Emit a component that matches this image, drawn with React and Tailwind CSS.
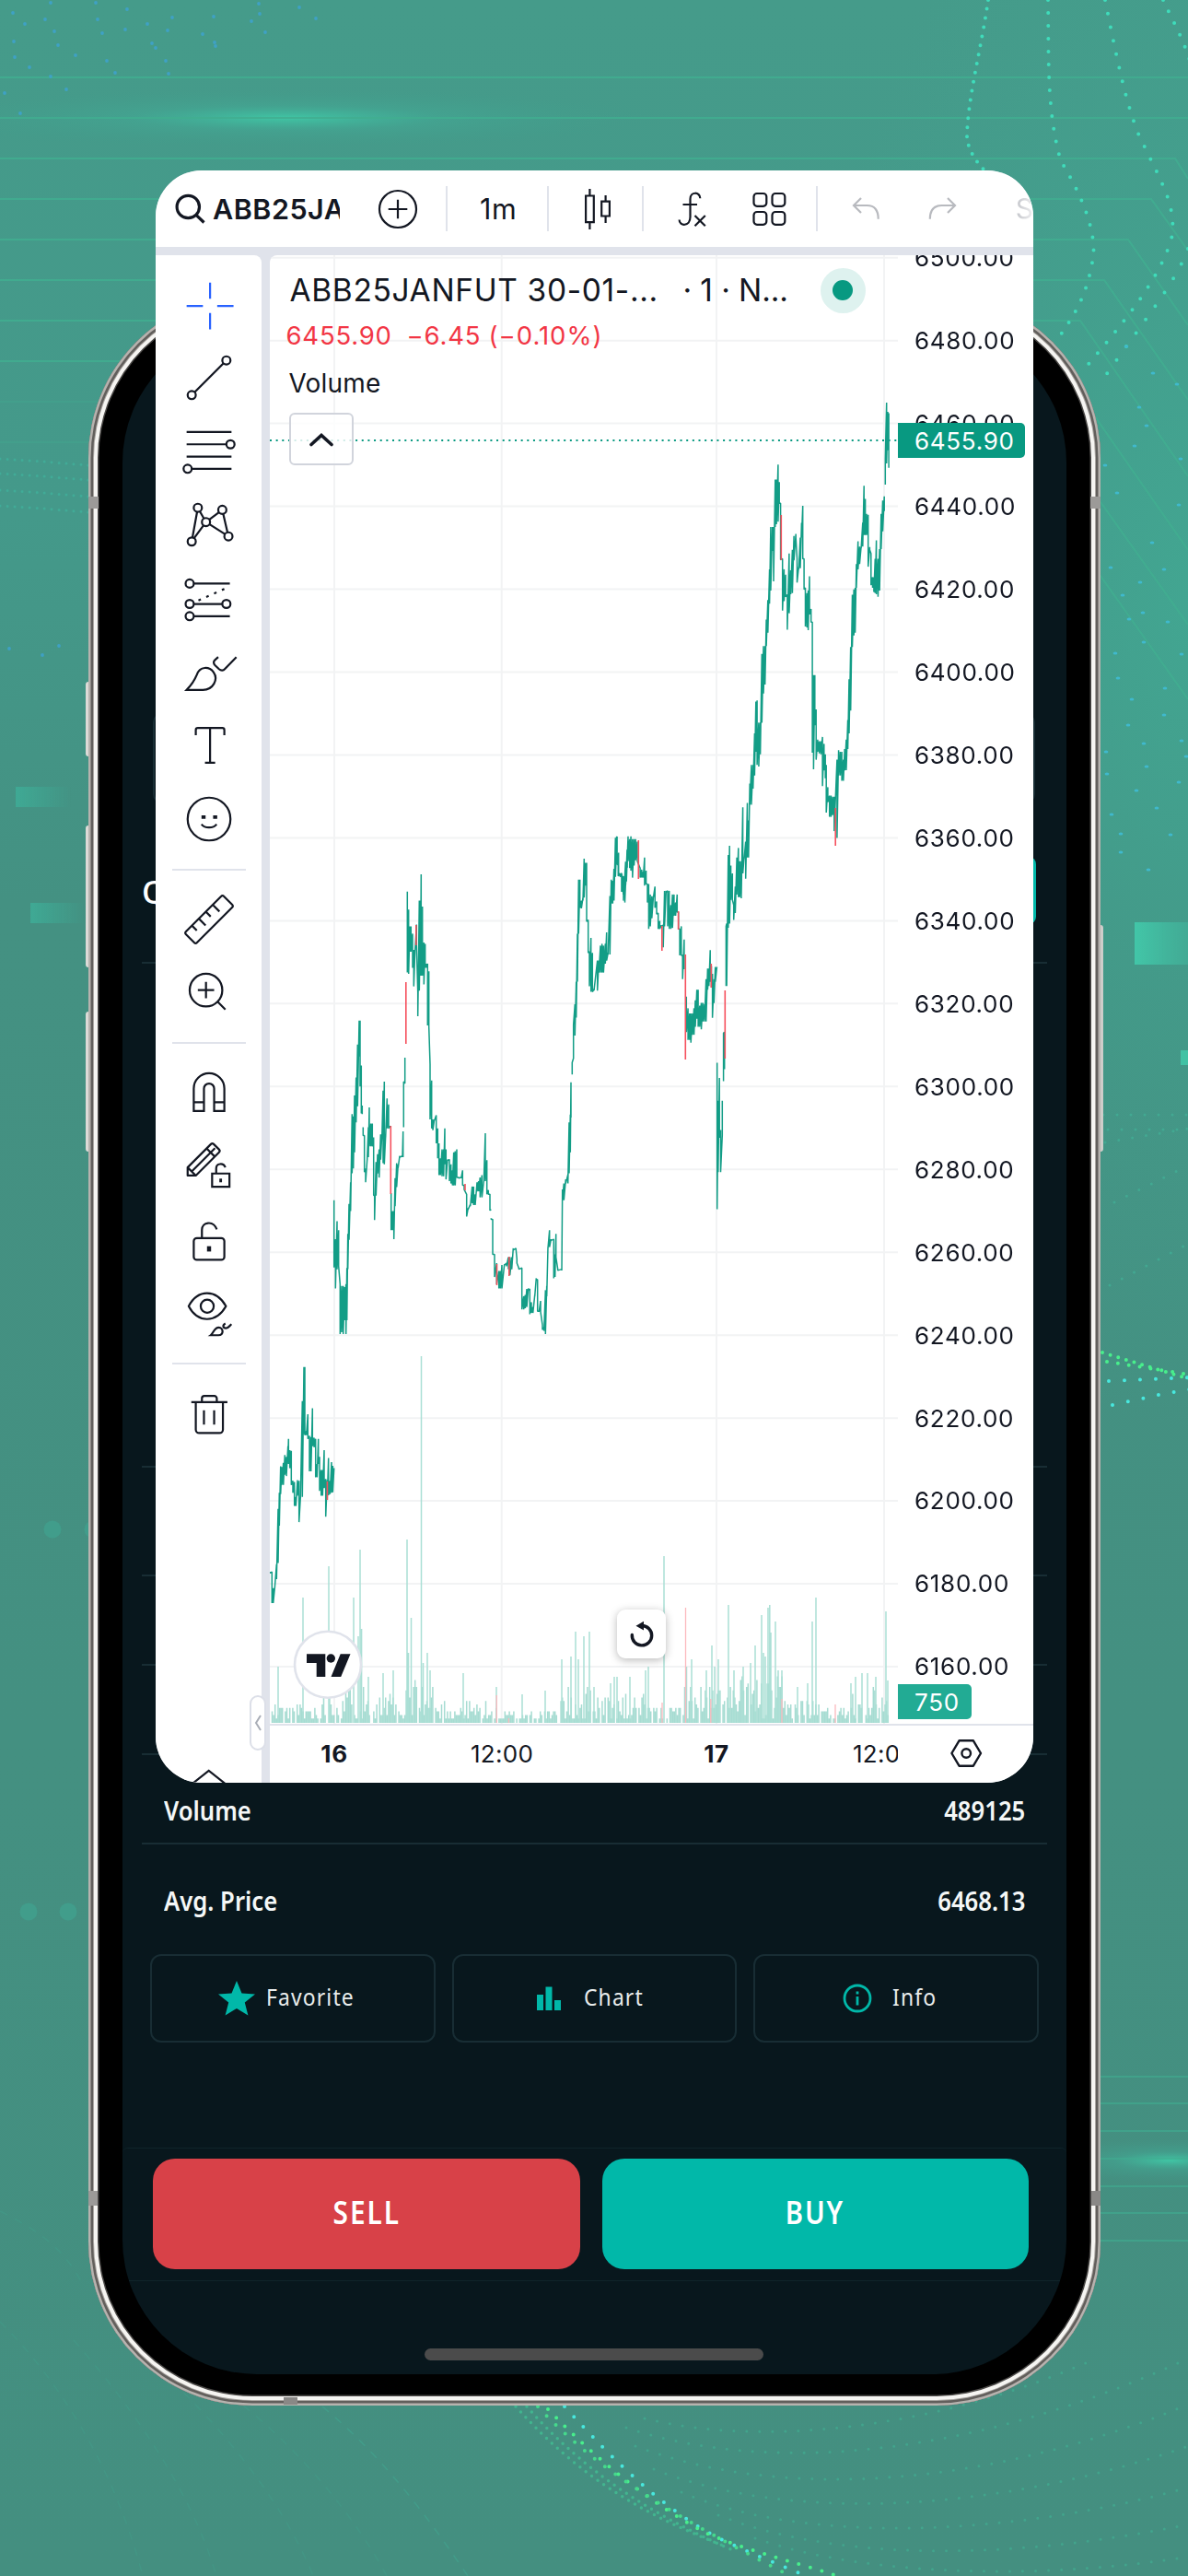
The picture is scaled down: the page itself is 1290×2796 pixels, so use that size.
import { Fragment } from 'react';

const PRICES = Array.from({ length: 18 }, (_, i) => (6500 - i * 20).toFixed(2));

// Each run holds bars as "x high low" in its own grid; `at` and `scale` place the grid on the chart.
const RUNS = [
  {
    at: [280, 880],
    scale: [1 / 3, 0.6505],
    bars: '40 1270 1272,46 1270 1322,50 1297 1322,55 1297 1298,61 1257 1282,66 1165 1255,70 1138 1193,74 1094 1140,78 1095 1125,83 1088 1125,88 1075 1108,93 1078 1110,98 1060 1080,100 1048 1090,104 1067 1097,109 1068 1125,114 1118 1138,119 1120 1160,124 1145 1160,129 1117 1143,134 1118 1187,139 1145 1147,145 985 1145,150 928 1040,153 928 1042,158 1035 1042,163 1007 1048,168 1043 1102,173 1045 1102,178 997 1060,183 1046 1062,188 1048 1112,193 1090 1112,197 1048 1090,201 1078 1135,206 1100 1143,211 1100 1143,216 1067 1130,221 1115 1178,226 1117 1150,230 1080 1142,235 1118 1140,240 1087 1138,244 1093 1137,248 1097 1098',
  },
  {
    at: [280, 880],
    scale: [1 / 3, 0.6505],
    bars: '248 650 762,253 715 797,258 685 765,263 700 760,268 790 873,273 793 870,278 793 873,283 795 850,287 790 873,290 763 850,293 706 765,297 656 716,302 620 668,307 506 605,311 510 597,315 475 570,320 445 520,325 390 493,330 350 410,333 350 460,337 425 505,340 492 506',
  },
  {
    at: [280, 880],
    scale: [1 / 3, 0.6505],
    bars: '343 528 542,347 542 603,351 597 620,356 582 583,360 528 578,363 495 560,368 522 560,373 522 560,377 545 642,380 642 683,385 586 642,390 573 605,395 565 612,400 540 582,404 540 548,408 467 588,412 452 590,416 543 545,421 480 530,426 490 530,431 526 528',
  },
  {
    at: [280, 880],
    scale: [1 / 3, 0.6505],
    bars: '434 638 700,439 668 700,443 668 715,447 613 660,452 588 628,457 590 596,462 576 578,471 576 578,473 535 578',
  },
  { at: [280, 880], scale: [1 / 3, 0.6505], bars: '475 528 452,479 455 412' },
  {
    at: [280, 880],
    scale: [1 / 3, 0.6505],
    bars: '487 135 270,491 165 272,495 193 235,499 193 235,504 205 262,508 232 293,512 232 233,517 190 225,521 303 343,526 150 300,530 150 275,532 106 275,536 160 275,541 220 290,545 222 262,549 255 262,553 255 358,557 268 360,561 423 515,566 450 530,570 515 533,575 515 517,581 508 555,586 530 580,590 555 608,595 580 608,600 565 610,605 565 610,609 530 590,613 565 615,618 582 583,624 582 618,629 590 622,634 600 625,638 570 625,643 568 625,648 565 612,654 612 613,662 612 613,667 600 625,672 625 632,680 640 677,685 663 665,692 657 660,698 627 655,703 627 658,708 640 658,714 620 635,719 618 635,724 612 645,730 608 645,736 618 620,741 538 618,746 583 640,751 633 640,756 640 667,758 665 667',
  },
  {
    at: [280, 880],
    scale: [1 / 3, 0.6505],
    bars: '760 680 682,765 682 740,771 740 778,778 755 790,785 768 797,790 768 797,795 758 797,803 757 758,810 755 760,816 745 765,821 745 775,827 745 765,832 730 733,841 730 732,844 748 755,850 763 765,860 763 832,866 810 832,871 808 830,876 798 828,881 797 800,886 798 840,891 820 838,896 828 838,902 808 810,907 780 783,911 782 835,916 835 836,921 818 836,927 858 866,932 862 868,937 800 873,941 793 810,945 728 730,950 700 728,955 715 717,964 715 780,968 740 778,971 706 745,977 765 767,990 765 767,992 632 650,997 622 650,1003 615 622,1010 607 622,1014 520 605,1018 507 570,1020 453 512',
  },
  {
    at: [280, 880],
    scale: [1 / 3, 0.6505],
    bars: '1024 440 420,1028 413 357,1033 323 375,1037 285 345,1041 205 285,1045 115 205,1049 115 162,1054 150 163,1059 145 150,1063 80 145,1067 87 125,1071 87 185,1076 182 237,1080 235 293,1085 212 302,1090 237 302,1095 298 300,1106 250 300,1111 250 270,1116 225 270,1121 222 270,1126 225 270,1132 222 255,1136 203 250,1141 237 240,1147 142 240,1151 115 155,1156 117 155,1160 97 150,1165 45 110,1170 43 90,1175 70 108,1180 105 110,1186 107 135,1191 115 150,1198 85 125,1203 65 95',
  },
  {
    at: [600, 440],
    scale: [0.3444, 0.574],
    bars: '202 815 865,207 870 890,212 885 887,218 885 920,223 890 925,228 890 940,233 865 900,238 815 862,243 820 875,247 815 880,252 820 893,257 820 870,262 820 860,267 825 862,276 875 893,281 878 893,286 882 893,290 855 908,295 880 905,299 905 940,303 905 990,308 925 985,313 928 970,318 928 930,323 910 950,328 938 962,333 960 990,338 975 990,343 983 985,349 983 1025,353 918 985,358 918 920,363 918 985,368 918 990,373 945 990,378 925 988,383 925 965,388 940 965,393 925 958,397 958 990,401 990 1040,406 985 1040,410 1040 1085,415 1010 1066',
  },
  {
    at: [600, 440],
    scale: [0.3444, 0.574],
    bars: '422 1118 1185,427 1140 1200,432 1150 1200,436 1150 1205,441 1150 1190,446 1140 1190,450 1125 1175,455 1105 1160,459 1105 1175,464 1135 1175,469 1130 1180,474 1130 1165,479 1132 1165,484 1085 1165,489 1065 1105,493 1065 1098,497 1030 1090,501 1060 1100,504 1075 1158,509 1085 1130,513 1062 1090,518 1062 1064',
  },
  {
    at: [600, 440],
    scale: [0.3444, 0.574],
    bars: '519 1243 1520,522 1315 1450,526 1272 1385,530 1370 1450,535 1380 1315',
  },
  { at: [600, 440], scale: [0.3444, 0.574], bars: '539 1278 1187,542 1185 1255' },
  {
    at: [600, 440],
    scale: [0.3444, 0.574],
    bars: '547 1098 985,549 980 1098,554 850 988,558 833 980,562 870 935,567 885 935,571 945 973,576 910 960,581 855 925,586 837 930,590 862 930,595 862 932,600 760 885,604 855 858,609 825 895,614 752 855,618 785 855,622 715 755,627 680 755,632 680 725,637 620 700,641 560 655,645 558 680,650 600 683,655 600 660,660 470 600,665 455 545,670 455 528,674 405 455,679 368 430,684 310 375,688 230 350,693 230 275,697 230 333,702 140 230,706 140 225,711 112 220,715 145 185,719 185 292,725 290 388,730 310 370,735 320 362,740 358 424,746 280 393,751 312 357,756 273 355,761 247 293,767 243 250,771 290 335,776 305 310,781 250 308,785 222 250,789 190 290,793 290 348,797 345 418,802 355 420,806 350 425,810 323 395,815 385 410,819 410 657,823 510 688,827 510 605,831 575 670,836 632 655,841 635 658,846 635 660,851 627 720,856 640 690,860 660 705,863 680 770,868 722 750,873 738 778,878 738 778,883 740 775,888 740 805,897 670 818,902 652 700,907 655 700,912 655 710,917 670 710,921 650 690,926 632 690,931 595 650,935 518 620,940 457 577,945 358 457,950 348 435,954 345 430,958 300 345,963 257 310,968 267 300,973 267 270,978 222 267,982 152 245,986 177 245,990 205 245,995 207 305,1000 268 273,1004 280 340,1009 325 345,1013 325 353,1017 290 355,1021 255 357,1026 290 362,1031 272 350,1036 205 272,1041 180 238,1046 172 200',
  },
  { at: [600, 440], scale: [0.3444, 0.574], bars: '1049 150 100,1053 -5 110,1057 12 85,1060 15 118' },
];

const toPath = ({ at, scale, bars }) =>
  bars
    .split(',')
    .map((bar, i) => {
      const [x, a, b] = bar.split(' ').map(Number);
      const px = (at[0] + x * scale[0]).toFixed(1);
      const y1 = (at[1] + a * scale[1]).toFixed(1);
      const y2 = (at[1] + b * scale[1]).toFixed(1);
      return `${i ? 'L' : 'M'}${px} ${y1}V${y2}`;
    })
    .join('');

const RED_BARS = [
  [440.8, 1066, 1133],
  [451.8, 1004, 1026],
  [355.4, 1608, 1628],
  [424.3, 1222, 1296],
  [505, 1285, 1292],
  [539.5, 1372, 1395],
  [552.8, 1364, 1385],
  [693.3, 912, 954],
  [718.8, 1005, 1032],
  [736.6, 989, 1009],
  [744.3, 1036, 1150],
  [772.3, 1046, 1072],
  [787.3, 1075, 1149],
  [848.3, 559, 608],
  [907.2, 877, 918],
];

const SPIKES = [
  [302, 61], [329, 136], [357, 170], [384, 136], [391, 188], [392.6, 102], [389, 94], [400, 50], [416, 54], [427, 57],
  [442, 199], [443.5, 76], [446.5, 114], [457.5, 398], [459.5, 65], [464, 76], [467, 57], [503, 54], [539, 39], [567, 31],
  [592, 35], [610, 69], [620, 72], [625, 99], [628, 69], [634, 94], [640, 99], [645, 39], [663, 43], [667, 50], [670, 50],
  [684, 50], [701, 57], [704, 61], [721, 181], [745.5, 61], [751, 69], [767, 57], [773, 84], [776, 61], [780, 69], [791, 128],
  [797, 57], [807, 61], [815, 65], [820, 84], [827, 117], [829, 76], [831, 72], [834, 125], [835.8, 128], [837, 98],
  [842, 110], [845, 57], [849, 57], [866, 39], [877, 43], [882, 110], [886, 136], [924, 43], [929, 50], [936, 54], [942, 54],
  [951, 50], [962, 121], [964, 46],
];

const VOLUME_LEVELS = [
  [350, 22], [400, 42], [430, 30], [440, 12], [470, 46], [528, 26], [608, 14], [650, 40], [700, 30], [738, 18],
  [800, 42], [850, 50], [890, 28], [916, 18], [970, 40],
];

function volumePath() {
  let seed = 11;
  let d = '';
  for (let x = 295.5; x < 965; x += 1.6) {
    seed = (seed * 1103515245 + 12345) % 2147483648;
    const r = seed / 2147483648;
    const level = VOLUME_LEVELS.find(([end]) => x < end)[1];
    const steps = Math.round((Math.pow(r, 1.3) * level) / 3.8);
    if (steps) d += `M${x.toFixed(1)} 1870v-${(steps * 3.8 + 1).toFixed(1)}`;
  }
  return d;
}

function PriceChart() {
  return (
    <svg className="block h-full w-full" viewBox="293 277 682 1594" fill="none">
      <g stroke="#f2f3f4" strokeWidth="2">
        {PRICES.map((price, i) => (
          <path key={price} d={`M293 ${279.7 + i * 89.96}H975`} />
        ))}
        <path d="M363 277V1871M544.7 277V1871M778 277V1871M960 277V1871" />
      </g>
      <path d={volumePath()} stroke="#a6dcd2" strokeWidth="1.5" />
      <path d={SPIKES.map(([x, h]) => `M${x} 1870v-${h}`).join('')} stroke="#aadfd5" strokeWidth="1.5" />
      <path
        d="M744.5 1870v-125M719 1870v-22M771.8 1870v-26M849 1870v-26M907 1870v-20M539.3 1870v-30M552.4 1870v-5"
        stroke="#fbb9be"
        strokeWidth="1.3"
      />
      <path d="M293 478H975" stroke="#089981" strokeWidth="2" strokeDasharray="2 4.65" />
      {RUNS.map((run) => (
        <path key={run.bars.slice(0, 16)} d={toPath(run)} stroke="#129d86" strokeWidth="1.5" strokeLinejoin="bevel" />
      ))}
      <path d={RED_BARS.map(([x, a, b]) => `M${x} ${a}V${b}`).join('')} stroke="#f5505d" strokeWidth="1.6" />
      <circle cx="356" cy="1806.7" r="36" fill="#fff" stroke="#e0e3eb" strokeWidth="2.6" />
      <path d="M333 1795.3h20.3v24.7h-9.6v-15H333zM369.7 1795.3h10.8l-10.3 24.7h-10.7z" fill="#131722" />
      <circle cx="359.3" cy="1800" r="4.7" fill="#131722" />
    </svg>
  );
}

const dot = (cx, cy, r = 2) => <circle cx={cx} cy={cy} r={r} fill="#fff" />;

const TOOL_GROUPS = [
  [
    <path key="cross" stroke="#2962ff" d="M3 14.5h8M18 14.5h8M14.5 3v8M14.5 18v8" />,
    <g key="trend">
      <path d="M7 21L21 7" />
      {dot(5.5, 22.5)}
      {dot(22.5, 5.5)}
    </g>,
    <g key="fib">
      <path d="M3 4.5h22M3 10.5h19.5M3 16.5h22M5.5 22.5H25" />
      {dot(24.5, 10.5)}
      {dot(3.5, 22.5)}
    </g>,
    <g key="pattern">
      <path d="M8.5 5.5L5.5 22M5.5 22L12.5 12.5M8.5 5.5L12.5 12.5M12.5 12.5L20.5 6.5M12.5 12.5L23.5 19.5M20.5 6.5L23.5 19.5" />
      {dot(8.5, 5.5)}
      {dot(20.5, 6.5)}
      {dot(12.5, 12.5)}
      {dot(5.5, 22)}
      {dot(23.5, 19.5)}
    </g>,
    <g key="forecast">
      <path d="M6.5 6.5H24.2M6.5 16.5h14M6.5 22.5H24.2" />
      <path d="M8.8 14.8L24 8" strokeDasharray="1.3 2.9" />
      {dot(4.5, 6.5)}
      {dot(4.5, 16.5)}
      {dot(22.5, 16.5)}
      {dot(4.5, 22.5)}
    </g>,
    <path
      key="brush"
      d="M3 22.5C5 20.5 6.9 17.8 8 15.1C9.500 10.7 14.1 11 16.2 13.8C18.7 17.3 16 22.5 11 22.5ZM18.5 6.4L17 7.7C16 8.6 16.1 9.6 17 10.5L18.9 12.3C19.9 13.2 21 13.1 21.8 12.2L27.4 6.4"
    />,
    <path key="text" d="M7.5 9V6.5a1 1 0 0 1 1-1h12a1 1 0 0 1 1 1V9M14.5 5.5v17M12 22.5h5" />,
    <g key="smile">
      <circle cx="14" cy="14" r="10.5" />
      <path d="M10.3 13h2M16 13h2" strokeWidth="1.7" />
      <path d="M10.3 16.5c1.6 2.2 5.800 2.2 7.4 0" />
    </g>,
  ],
  [
    <path
      key="ruler"
      strokeLinejoin="round"
      d="M2.6 20L20 2.6a.8.8 0 0 1 1.2 0L25.4 6.8a.8.8 0 0 1 0 1.2L8 25.4a.8.8 0 0 1-1.2 0L2.6 21.2a.8.8 0 0 1 0-1.2ZM5.6 17l2.4 2.4M9 13.6l3.3 3.3M12.4 10.2l2.4 2.4M15.8 6.8l3.3 3.3"
    />,
    <g key="zoom">
      <circle cx="12.5" cy="12.5" r="8" />
      <path d="M8.5 12.5h8M12.5 8.5v8M18.2 18.2l3.8 3.8" />
    </g>,
  ],
  [
    <path key="magnet" d="M6.5 23v-11a7.5 7.5 0 0 1 15 0v11h-5v-11a2.5 2.5 0 0 0-5 0v11ZM6.5 18.7h5M16.5 18.7h5" />,
    <g key="pencil">
      <path
        strokeLinejoin="round"
        d="M3.5 18.5v-4L14.9 3.1a1 1 0 0 1 1.4 0l2.6 2.6a1 1 0 0 1 0 1.4L7.5 18.5ZM3.5 14.5l4 4M5.5 16.5L16.9 5.1M12.8 5.2l4 4"
      />
      <path d="M15.5 17.5h8.5v6.5h-8.500ZM17.5 17.5v-2.5c0-2.5 3.5-3 4.5-.5" />
      <path d="M19.7 20v1.8" strokeWidth="1.3" />
    </g>,
    <g key="lock">
      <rect x="6.5" y="13" width="15" height="10.7" rx="1.5" />
      <path d="M10.5 13V9c0-3.800 5.500-5 7.300-.2" />
      <path d="M14 17v2.6" strokeWidth="2" />
    </g>,
    <g key="eye">
      <path d="M4 10.3C8.500 1.8 17.5 1.8 22.3 10.3C17.5 18.7 8.500 18.7 4 10.3Z" strokeLinejoin="round" />
      <circle cx="13.1" cy="10.3" r="3.2" />
      <path d="M14.8 24.5c1.5-1.2 1.7-3.800 4-3.800c2.2 0 2.7 3.800-.2 3.800ZM22 18.7c-1.5.8-1.3 2.3.3 2.4c1 0 1.5-.9 2.7-2" />
    </g>,
  ],
  [
    <path
      key="trash"
      d="M5.3 8.5H23M10.5 8.5V6.7a1.2 1.2 0 0 1 1.2-1.2h4.9a1.2 1.2 0 0 1 1.2 1.2v1.8M7.5 8.5v13.5a1.7 1.7 0 0 0 1.7 1.7h9.9a1.7 1.7 0 0 0 1.7-1.7V8.500M11.5 12.5v7M16.5 12.5v7"
    />,
  ],
];

function Toolbar() {
  return (
    <div className="relative w-[115px] shrink-0 overflow-hidden rounded-tr-lg bg-white pt-[22.5px]">
      {TOOL_GROUPS.map((group, i) => (
        <Fragment key={i}>
          {i > 0 && <div className="mt-[4.7px] mb-[22px] ml-[18px] h-[2px] w-[80px] bg-[#e0e3eb]" />}
          {group.map((icon) => (
            <div key={icon.key} className="h-[79.83px] pl-[27px]">
              <svg className="size-[62px]" viewBox="0 0 28 28" fill="none" stroke="#131722">
                {icon}
              </svg>
            </div>
          ))}
        </Fragment>
      ))}
      <svg className="mt-[336.5px] ml-[38px] block h-[20px] w-[40px]" viewBox="0 0 40 20" fill="none" stroke="#131722" strokeWidth="2.2">
        <path d="M0 18.5L19.7 3L39.4 18.5" />
      </svg>
    </div>
  );
}

const Divider = () => <div className="h-[49px] w-[2px] shrink-0 bg-[#e0e3eb]" />;

function TopBar() {
  return (
    <div className="flex h-[83px] shrink-0 items-center overflow-hidden bg-white pl-[21px] text-[#131722]">
      <svg className="size-[36px] shrink-0" viewBox="0 0 36 36" fill="none" stroke="currentColor" strokeWidth="3.2">
        <circle cx="14.3" cy="15.5" r="12.2" />
        <path d="M23 24.3l8.5 8.2" />
      </svg>
      <div className="ml-[5px] w-[138px] overflow-hidden text-[30.5px] font-semibold tracking-[0.5px] whitespace-nowrap">ABB25JA</div>
      <svg className="ml-[41px] size-[44px] shrink-0" viewBox="0 0 44 44" fill="none" stroke="currentColor" strokeWidth="2.2">
        <circle cx="22" cy="22" r="20" />
        <path d="M11.7 22h20.6M22 11.7v20.6" />
      </svg>
      <div className="ml-[30px]">
        <Divider />
      </div>
      <div className="w-[108px] shrink-0 pl-[3px] text-center text-[30.5px] tracking-[0.8px]">1m</div>
      <Divider />
      <svg className="ml-[36px] h-[46px] w-[34px] shrink-0" viewBox="0 0 34 46" fill="none" stroke="currentColor" strokeWidth="2.2">
        <path d="M4.1 8.500h8.700v28.700H4.100ZM8.400 1v7.500M8.400 37.200V45M21.2 14.7h8.700v15.8h-8.700ZM25.6 8v6.7M25.6 30.5V38" />
      </svg>
      <div className="ml-[31px]">
        <Divider />
      </div>
      <svg className="ml-[37px] h-[40px] w-[34px] shrink-0" viewBox="0 0 34 40" fill="none" stroke="currentColor" strokeWidth="2.2">
        <path d="M24.3 8.3C24.3 1 13.5 .5 13.5 9V28.5C13.5 39 1.6 39 1.6 31.5M5.5 15h15.500M18.5 27l11.300 11.300M29.8 27L18.5 38.3" />
      </svg>
      <svg className="ml-[47.5px] size-[38px] shrink-0" viewBox="0 0 38 38" fill="none" stroke="currentColor" strokeWidth="2.2">
        <rect x="1.5" y="2" width="13.8" height="13.8" rx="3.5" />
        <rect x="21.5" y="2" width="13.8" height="13.8" rx="3.5" />
        <rect x="1.5" y="22" width="13.8" height="13.8" rx="3.5" />
        <rect x="21.5" y="22" width="13.8" height="13.8" rx="3.5" />
      </svg>
      <div className="ml-[30.5px]">
        <Divider />
      </div>
      <svg className="ml-[37px] h-[28px] w-[32px] shrink-0 text-[#b8babf]" viewBox="0 0 32 28" fill="none" stroke="currentColor" strokeWidth="2.2">
        <path d="M10 2L2 10l8 8M2 10h14.5c8 0 12.2 5 12.2 14.7" />
      </svg>
      <svg className="ml-[50px] h-[28px] w-[32px] shrink-0 text-[#b8babf]" viewBox="0 0 32 28" fill="none" stroke="currentColor" strokeWidth="2.2">
        <path d="M22 2l8 8l-8 8M30 10H15.5C7 10 2.8 15 2.8 24.7" />
      </svg>
      <div className="ml-[64px] bg-gradient-to-r from-[#c3c5ca] to-[#efeff1] bg-clip-text text-[30px] text-transparent">S</div>
    </div>
  );
}

function Legend() {
  return (
    <div className="absolute inset-x-0 top-0 pl-[20.5px] text-[#131722]">
      <div className="flex h-[76px] items-center text-[33.5px] whitespace-nowrap">
        <span className="w-[428px] pl-px tracking-[0.65px]">ABB25JANFUT 30-01-...</span>
        <span className="w-[140px] tracking-[-0.1px]">· 1 · N...</span>
        <span className="ml-[9px] flex size-[49px] items-center justify-center rounded-full bg-[#def2ef]">
          <span className="size-[22px] rounded-full bg-[#089981]" />
        </span>
      </div>
      <div className="-ml-[3px] flex h-[24px] items-center text-[27.5px] whitespace-nowrap text-[#f23645]">
        <span className="w-[131px] tracking-[0.8px]">6455.90</span>
        <span className="w-[89px] tracking-[0.8px]">−6.45</span>
        <span className="tracking-[1px]">(−0.10%)</span>
      </div>
      <div className="mt-[22px] text-[28px] leading-[34px] tracking-[0.2px]">Volume</div>
      <div className="mt-[15px] flex h-[57px] w-[70px] items-center justify-center rounded-md border-2 border-[#d1d4dc] bg-white/80">
        <svg className="h-[16px] w-[28px]" viewBox="0 0 28 16" fill="none" stroke="#131722" strokeWidth="3.6" strokeLinecap="round">
          <path d="M3 13.5L14 3.5l11 10" />
        </svg>
      </div>
    </div>
  );
}

function ChartCard() {
  return (
    <div className="absolute top-[185px] left-[169px] flex h-[1750px] w-[953px] flex-col overflow-hidden rounded-[50px] bg-[#e0e3eb]">
      <TopBar />
      <div className="flex min-h-0 flex-1 gap-[9px] pt-[9px]">
        <Toolbar />
        <div className="flex w-[829px] flex-col overflow-hidden rounded-tl-lg bg-white">
          <div className="flex h-[1594px] shrink-0">
            <div className="relative w-[682px] shrink-0">
              <PriceChart />
              <Legend />
              <div className="absolute top-[1470px] left-[377px] flex size-[53px] items-center justify-center rounded-[9px] bg-white shadow-[0_2px_10px_rgba(0,0,0,0.28)]">
                <svg className="size-[30px]" viewBox="0 0 30 30" fill="none" stroke="#131722" strokeWidth="3.4">
                  <path d="M4.3 15.500A10.700 10.700 0 1 0 15 5.500h-1" strokeLinecap="round" />
                  <path d="M8.500 5.800L17 .8V10.500Z" fill="#131722" stroke="none" />
                </svg>
              </div>
            </div>
            <div className="relative flex-1 overflow-hidden text-[26px] tracking-[0.7px] text-[#131722]">
              <div className="-mt-[42.3px]">
                {PRICES.map((price) => (
                  <div key={price} className="flex h-[89.96px] items-center pl-[18px]">
                    {price}
                  </div>
                ))}
              </div>
              <div className="absolute top-[182px] left-0 flex h-[38px] w-[138px] items-center rounded-r-[5px] bg-[#089981] pl-[18px] text-white">
                6455.90
              </div>
              <div className="absolute top-[1551px] left-0 flex h-[38px] w-[80px] items-center rounded-r-[5px] bg-[#22ab94] pl-[18px] text-white">
                750
              </div>
            </div>
          </div>
          <div className="flex flex-1 border-t-2 border-[#e0e3eb] text-[26px] text-[#131722]">
            <div className="flex h-[60px] w-[682px] shrink-0 items-center overflow-hidden">
              <div className="ml-[20px] w-[100px] shrink-0 text-center font-bold tracking-[0.7px]">16</div>
              <div className="ml-[82px] w-[100px] shrink-0 text-center tracking-[0.3px]">12:00</div>
              <div className="ml-[133px] w-[100px] shrink-0 text-center font-bold tracking-[0.7px]">17</div>
              <div className="ml-[82px] w-[100px] shrink-0 text-center tracking-[0.3px]">12:00</div>
            </div>
            <svg className="mt-[12px] ml-[56px] size-[36px]" viewBox="0 0 36 36" fill="none" stroke="#131722" strokeWidth="2.4">
              <path d="M10.5 4.3h15.4L34 18l-8.100 13.700H10.5L2.4 18Z" strokeLinejoin="round" />
              <circle cx="18.2" cy="18" r="4.8" />
            </svg>
          </div>
        </div>
      </div>
      <div className="absolute top-[1655px] left-[102px] flex h-[60px] w-[18px] items-center justify-center rounded-[9px] border-2 border-[#dcdfe8] bg-white">
        <svg className="h-[18px] w-[10px] shrink-0" viewBox="0 0 10 18" fill="none" stroke="#a9adb6" strokeWidth="2">
          <path d="M8 1L3 9l5 8" />
        </svg>
      </div>
    </div>
  );
}

function Action({ icon, label, textClass }) {
  return (
    <div className="flex h-[96px] items-center justify-center rounded-[12px] border-2 border-[#182d34] text-[26px] text-[#e8ecec]">
      {icon}
      <span className={`${textClass} -mt-[3px] origin-left scale-x-[0.88] tracking-[1.3px] whitespace-nowrap`}>{label}</span>
    </div>
  );
}

function StatRow({ label, value }) {
  return (
    <div className="mx-[21px] flex h-[97px] shrink-0 items-center justify-between border-b-2 border-[#182d34] px-[24px] pt-[25px] text-[29.5px] font-semibold text-[#f4f7f7] last-of-type:border-0">
      <span className="origin-left scale-x-[0.87]">{label}</span>
      <span className="origin-right scale-x-[0.87]">{value}</span>
    </div>
  );
}

function Phone() {
  return (
    <div className="relative h-[2292px] w-[1099px] rounded-[178px] bg-black px-[37px] pt-[37px] pb-[34px] shadow-[inset_0_0_0_2.5px_#b7b3af,inset_0_0_0_5px_#625f5c,inset_0_0_0_6px_#aaa6a2,inset_0_0_0_10px_#f6f5f2,inset_0_0_0_11.5px_#4b4947]">
      <div className="absolute top-[421px] -left-[3px] h-[81px] w-[3px] rounded-l bg-[#dcdad7]" />
      <div className="absolute top-[577px] -left-[3px] h-[154px] w-[3px] rounded-l bg-[#dcdad7]" />
      <div className="absolute top-[779px] -left-[3px] h-[152px] w-[3px] rounded-l bg-[#dcdad7]" />
      <div className="absolute top-[685px] -right-[3px] h-[246px] w-[3px] rounded-r bg-[#cfcdca]" />
      <div className="absolute top-[220px] left-0 h-[13px] w-[11px] bg-[#9c9a98]" />
      <div className="absolute top-[220px] right-0 h-[13px] w-[11px] bg-[#9c9a98]" />
      <div className="absolute top-[2059px] left-0 h-[16px] w-[10px] bg-[#9c9a98]" />
      <div className="absolute top-[2059px] right-0 h-[16px] w-[10px] bg-[#8a8886]" />
      <div className="absolute bottom-[1px] left-[212px] h-[8px] w-[15px] bg-[#8a8886]" />
      <div className="flex h-full flex-col overflow-hidden rounded-[146px] bg-[#08171d] font-['Noto_Sans',sans-serif]">
        <div className="mt-[418px] mr-[34px] ml-[33px] h-[98px] shrink-0 rounded-[10px] border-2 border-[#182d34]" />
        <div className="mx-[21px] flex h-[174px] shrink-0 items-start justify-between border-b-2 border-[#182d34] pt-[58px] pr-[12px]">
          <span className="text-[35px] leading-[75px] font-medium text-white">Q</span>
          <span className="h-[73px] w-[140px] rounded-lg bg-[#01b8a9]" />
        </div>
        <div className="mx-[21px] h-[547px] shrink-0 border-b-2 border-[#182d34]" />
        <div className="mx-[21px] h-[118px] shrink-0 border-b-2 border-[#182d34]" />
        <div className="mx-[21px] h-[97px] shrink-0 border-b-2 border-[#182d34]" />
        <div className="mx-[21px] h-[97px] shrink-0 border-b-2 border-[#182d34]" />
        <StatRow label="Volume" value="489125" />
        <div className="mx-[21px] flex h-[97px] shrink-0 items-center justify-between px-[24px] pt-[25px] text-[29.5px] font-semibold text-[#f4f7f7]">
          <span className="origin-left scale-x-[0.87]">Avg. Price</span>
          <span className="origin-right scale-x-[0.87]">6468.13</span>
        </div>
        <div className="mx-[30px] mt-[22px] grid grid-cols-3 gap-[18px]">
          <Action
            label="Favorite"
            textClass="ml-[12px] w-[110px]"
            icon={
              <svg className="size-[40px]" viewBox="0 0 40 38" fill="#01b8a9">
                <path d="M20 0l5.500 13.400L40 14.5L28.8 23.6L32.4 37.5L20 30L7.6 37.5L11.2 23.6L0 14.5L14.5 13.4Z" />
              </svg>
            }
          />
          <Action
            label="Chart"
            textClass="ml-[25px] w-[74px]"
            icon={
              <svg className="size-[26px]" viewBox="0 0 26 26" fill="#01b8a9">
                <path d="M0 9h7v17H0ZM9.500 0.500h7V26h-7ZM19 15h7v11h-7Z" />
              </svg>
            }
          />
          <Action
            label="Info"
            textClass="ml-[22px] w-[62px]"
            icon={
              <svg className="size-[32px]" viewBox="0 0 32 32" fill="none" stroke="#01b8a9" strokeWidth="2.8">
                <circle cx="16" cy="16" r="14" />
                <path d="M16 14v9.500M16 8.500v3" />
              </svg>
            }
          />
        </div>
        <div className="mt-[114px] flex h-[145px] shrink-0 gap-[24px] rounded-t-[6px] border-y border-[#10242a] pt-[11px] pr-[41px] pl-[33px] text-[33.5px] font-semibold tracking-[2.2px] text-white">
          <div className="flex h-[120px] flex-1 items-center justify-center rounded-[24px] bg-[#d84148]">
            <span className="-mt-[3px] scale-x-[0.89]">SELL</span>
          </div>
          <div className="flex h-[120px] flex-1 items-center justify-center rounded-[24px] bg-[#01b8a9]">
            <span className="-mt-[3px] scale-x-[0.87]">BUY</span>
          </div>
        </div>
        <div className="mt-[73px] ml-[328px] h-[13px] w-[368px] shrink-0 rounded-full bg-[#4b4b4b]" />
      </div>
    </div>
  );
}

const BLUE_DOTS = [
  [14, 14], [27, 26], [55, 3], [49, 21], [59, 34], [104, 3], [106, 21], [111, 36], [138, 10], [136, 32], [160, 26], [165, 47], [182, 33],
  [187, 19], [220, 37], [233, 46], [232, 18], [281, 4], [282, 15], [325, 8], [343, 20], [273, 23], [288, 35], [234, 50], [169, 52],
  [180, 66], [125, 79], [183, 80], [32, 73], [15, 45], [16, 62], [55, 83], [72, 97], [5, 101], [22, 123], [63, 49], [82, 60], [116, 66],
  [10, 704], [46, 711], [64, 701],
];

const RIGHT_DOTS = [
  [1237, 442], [1245, 462], [1232, 484], [1206, 616], [1219, 646], [1226, 672], [1211, 709], [1214, 736], [1229, 759], [1225, 787],
  [1201, 816], [1202, 840], [1207, 884], [1217, 905], [1217, 925], [1245, 832], [1234, 858], [1242, 807], [1247, 944], [1256, 877],
  [1271, 906], [1264, 776], [1265, 747], [1268, 675], [1242, 697], [1264, 618], [1251, 589], [1282, 498], [1252, 405], [1223, 376],
  [1278, 417], [1283, 710], [1283, 804], [1280, 849], [1288, 821], [1280, 548], [1238, 632], [1241, 665], [1213, 535], [1200, 505],
];

function Backdrop() {
  return (
    <svg className="absolute inset-0 h-full w-full" viewBox="0 0 1290 2796" fill="none">
      <defs>
        <linearGradient id="page" x1="0" y1="0" x2="0" y2="1">
          <stop offset="0" stopColor="#459b8a" />
          <stop offset=".2" stopColor="#44998a" />
          <stop offset=".35" stopColor="#449182" />
          <stop offset="1" stopColor="#448f80" />
        </linearGradient>
        <radialGradient id="glow">
          <stop offset="0" stopColor="#40c5a4" />
          <stop offset=".4" stopColor="#42a995" stopOpacity=".5" />
          <stop offset="1" stopColor="#429a89" stopOpacity="0" />
        </radialGradient>
        <radialGradient id="haze">
          <stop offset="0" stopColor="#42a792" stopOpacity=".9" />
          <stop offset="1" stopColor="#43a08f" stopOpacity="0" />
        </radialGradient>
        <linearGradient id="fade">
          <stop offset="0" stopColor="#3fa994" />
          <stop offset="1" stopColor="#3fa994" stopOpacity="0" />
        </linearGradient>
        <linearGradient id="fadeBright">
          <stop offset="0" stopColor="#42c6a8" />
          <stop offset="1" stopColor="#42b099" stopOpacity=".3" />
        </linearGradient>
      </defs>
      <path d="M0 0h1290v2796H0Z" fill="url(#page)" />
      <ellipse cx="1290" cy="650" rx="420" ry="900" fill="url(#haze)" />
      <ellipse cx="310" cy="128" rx="420" ry="34" fill="url(#glow)" />
      <ellipse cx="1270" cy="2345" rx="150" ry="24" fill="url(#glow)" />
      <g stroke="#42ae91" strokeWidth="2" opacity=".85">
        <path d="M0 84H1290M0 128H1290M0 172H1276L1290 194M0 216H1250L1290 272M0 260H1225L1290 353M0 304H1199L1290 434M0 348H1173L1290 517M0 392H1147L1290 597M1190 538L1290 678M1190 618L1290 759" />
        <path d="M0 436H169M0 480H169" opacity=".35" />
        <path d="M1195 2254h95M1195 2283h95M1195 2313h95M1195 2343h95M1195 2373h95M1195 2402h95M1195 2432h95" opacity=".7" />
      </g>
      <g stroke="#3fdcbb" strokeWidth="4" strokeLinecap="round" strokeDasharray="0 10">
        <path d="M1073 0C1066 50 1050 110 1050 150C1052 165 1062 180 1080 195" />
        <path d="M1138 0C1139 60 1136 120 1152 175C1180 220 1192 260 1186 285C1178 330 1160 350 1146 372" strokeDasharray="0 14" />
        <path d="M1200 0C1212 60 1222 110 1236 145C1262 200 1276 220 1273 255C1262 300 1220 350 1182 395" strokeDasharray="0 15" />
        <path d="M1263 0C1272 20 1284 40 1292 66" strokeDasharray="0 14" />
        <path d="M1290 270C1275 310 1240 350 1192 420" strokeDasharray="0 18" />
      </g>
      <g fill="#3fa3cf" opacity=".85">
        {BLUE_DOTS.map(([x, y]) => (
          <circle key={`${x}-${y}`} cx={x} cy={y} r="1.9" />
        ))}
      </g>
      <g fill="#40b9cd">
        {RIGHT_DOTS.map(([x, y]) => (
          <ellipse key={`${x}-${y}`} cx={x} cy={y} rx="2.4" ry="1.6" />
        ))}
      </g>
      <g stroke="#41ab97" strokeWidth="3" strokeLinecap="round" strokeDasharray="0 8">
        <path d="M0 498C40 500 70 503 96 505M0 514C40 516 70 519 96 521M0 532C40 534 70 537 96 539M0 549C40 551 70 554 96 556" />
      </g>
      <path d="M17 854h60v22h-60Z" fill="url(#fade)" />
      <path d="M33 980h60v22h-60Z" fill="url(#fade)" />
      <path d="M1232 1001h90v46h-90Z" fill="url(#fadeBright)" />
      <path d="M1282 1140h8v16h-8Z" fill="#41c2a4" />
      <g fill="#419d8b">
        <circle cx="57" cy="1660" r="9.5" />
        <circle cx="101" cy="1660" r="9.5" />
        <circle cx="31" cy="2075" r="9.5" />
        <circle cx="74" cy="2075" r="9.5" />
      </g>
      <g strokeLinecap="round" strokeWidth="4">
        <path d="M1197 1468L1292 1497" stroke="#48ef8c" strokeDasharray="0 9" />
        <path d="M1202 1478L1292 1492" stroke="#48ef8c" strokeDasharray="0 12" />
        <path d="M1204 1499L1292 1495M1208 1525C1240 1518 1265 1512 1292 1508" stroke="#48e8de" strokeDasharray="0 17" />
        <path
          d="M1198 1210H1290M1203 1226H1290M1200 1240L1290 1225M1210 1305L1290 1265M1205 1395L1290 1350"
          stroke="#41b197"
          strokeWidth="3"
          strokeDasharray="0 15"
          opacity=".7"
        />
      </g>
      <g strokeLinecap="round" strokeWidth="4">
        <path d="M613 2612C670 2675 720 2722 775 2752C810 2770 850 2785 880 2798" stroke="#48e8de" strokeDasharray="0 15" />
        <path d="M595 2615C650 2672 710 2720 768 2750C820 2772 880 2785 915 2798" stroke="#48ef8c" strokeDasharray="0 13" />
        <path d="M584 2612C650 2684 740 2735 862 2798" stroke="#46d98c" strokeDasharray="0 14" />
        <path d="M560 2612C630 2690 700 2730 790 2765M572 2612C640 2690 720 2735 800 2770" stroke="#42b58f" strokeWidth="3.5" strokeDasharray="0 8" />
      </g>
      <g stroke="#42a48c" strokeWidth="3" strokeLinecap="round" strokeDasharray="0 14">
        <path d="M700 2625C820 2655 1010 2640 1190 2560" />
        <path d="M680 2635C830 2685 1050 2670 1290 2560" />
        <path d="M690 2655C850 2715 1070 2700 1290 2610" />
        <path d="M710 2680C860 2740 1090 2725 1290 2655" />
        <path d="M740 2705C880 2765 1110 2750 1290 2700" />
        <path d="M780 2730C920 2785 1120 2775 1290 2740" />
        <path d="M820 2755C950 2800 1150 2798 1290 2775" />
      </g>
      <g stroke="#42a590" strokeWidth="1.5" strokeDasharray="9 9" opacity=".6">
        <path d="M350 2612C420 2670 470 2740 508 2796" />
        <path
          d="M250 2600C330 2660 390 2740 420 2796M160 2560C240 2630 310 2720 340 2796M80 2540C150 2620 210 2710 235 2796M0 2520C80 2600 130 2700 155 2796M0 2400C40 2420 70 2440 90 2480"
          opacity=".5"
        />
      </g>
    </svg>
  );
}

export default function App() {
  return (
    <div className="relative h-[2796px] w-[1290px] overflow-hidden bg-[#449384] pt-[319px] pl-[96px] font-[Inter,'Liberation_Sans',sans-serif]">
      <Backdrop />
      <Phone />
      <ChartCard />
    </div>
  );
}
